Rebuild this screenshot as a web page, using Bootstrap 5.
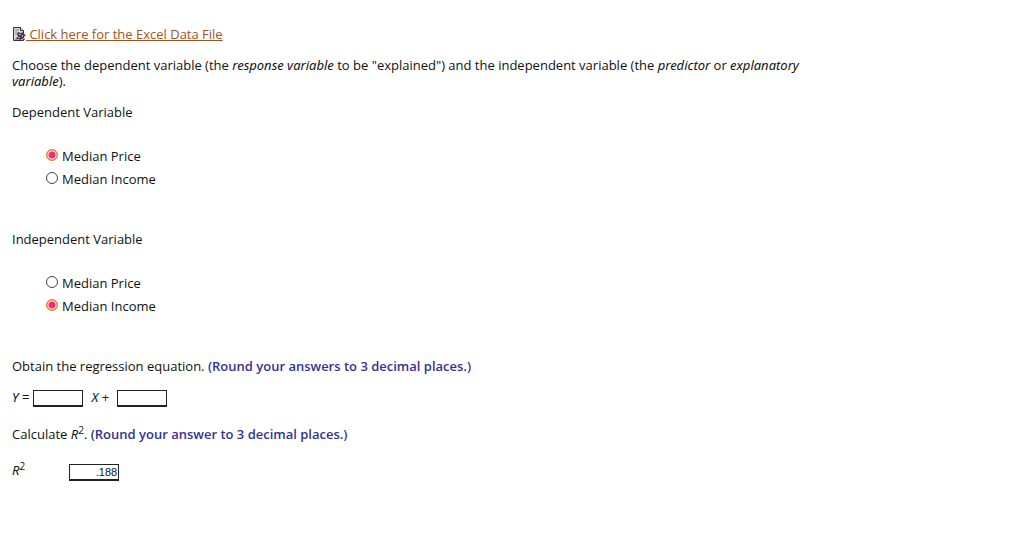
<!DOCTYPE html>
<html lang="en">
<head>
<meta charset="utf-8">
<meta name="viewport" content="width=device-width, initial-scale=1">
<title>Regression question</title>
<link rel="stylesheet" href="https://cdn.jsdelivr.net/npm/bootstrap@5.3.0/dist/css/bootstrap.min.css">
<style>
body { font-family: "Open Sans", "Noto Sans", sans-serif; font-size: 13px; line-height: 16px; color: #111; background: #fff; }
main { padding: 26px 12px; }
i { font-family: "Noto Sans", "Open Sans", sans-serif; }
.data-link { color: #a4511c; }
.data-link:hover { color: #7c3a10; }
.file-icon { width: 14px; height: 15px; }
.prompt-text { margin-bottom: 15px; }
.choices { margin: 0 0 44px 34px; padding-top: 28px; gap: 7px; }
.choices .form-check { gap: 4px; min-height: 0; }
.choices .form-check-input { width: 12px; height: 12px; margin: 1px 0 0; float: none; border: 1px solid #444; box-shadow: none; }
.choices .form-check-input:checked { border-color: #e8772e; background: radial-gradient(circle, #f5277f 0 3px, #fff0dc 4px, #f08a3c 5px); }
.hint { color: #34309a; font-weight: 600; }
.answer { width: 50px; height: 17px; padding: 0 1px; border: 1px solid #222; border-bottom-width: 2px; border-radius: 0; font-family: "Liberation Sans", sans-serif; font-size: 11px; line-height: 14px; text-align: right; color: #111; }
.answer:focus { box-shadow: none; border-color: #222; }
sup { font-size: 10px; top: -5px; }
.equation { margin-bottom: 19px; }
.equation label { padding-bottom: 2px; }
.equation label:first-child { margin-right: 4px; }
.result { gap: 44px; margin-top: 20px; }
.result label { padding-bottom: 4px; }
</style>
</head>
<body>
<main class="container-fluid">
  <div class="prompt-text d-flex align-items-center">
    <svg class="file-icon" viewBox="0 0 14 15" aria-hidden="true">
      <path d="M1.500 .5h7l3 3v10h-10z" fill="#d8d8d8" stroke="#333"/>
      <path d="M8.500 .5v3h3" fill="#fff" stroke="#333"/>
      <path d="M3 3h4M3 5h2M3 7h2" stroke="#888"/>
      <path d="M6 5l3 1 2-1 1 2 2 1-2 2 1 3-3-1-2 1-2-1-3 1 3-4-1-2z" fill="#4a404e"/>
      <path d="M7 7h2v1H7zM10 8h1v2h-1zM6 10h2v1H6zM11 11h1v1h-1z" fill="#c99ac2"/>
    </svg>
    <a class="data-link" href="#">&nbsp;Click here for the Excel Data File</a>
  </div>
  <div class="row"><div class="col-10">
    <p class="prompt-text">Choose the dependent variable (the <i>response variable</i> to be "explained") and the independent variable (the <i>predictor</i> or <i>explanatory variable</i>).</p>
  </div></div>

  <div id="dep-label">Dependent Variable</div>
  <div class="choices d-flex flex-column" role="radiogroup" aria-labelledby="dep-label">
    <div class="form-check d-flex p-0 m-0">
      <input class="form-check-input" type="radio" name="dep" id="dep-price" checked>
      <label for="dep-price">Median Price</label>
    </div>
    <div class="form-check d-flex p-0 m-0">
      <input class="form-check-input" type="radio" name="dep" id="dep-income">
      <label for="dep-income">Median Income</label>
    </div>
  </div>

  <div id="ind-label">Independent Variable</div>
  <div class="choices d-flex flex-column" role="radiogroup" aria-labelledby="ind-label">
    <div class="form-check d-flex p-0 m-0">
      <input class="form-check-input" type="radio" name="ind" id="ind-price">
      <label for="ind-price">Median Price</label>
    </div>
    <div class="form-check d-flex p-0 m-0">
      <input class="form-check-input" type="radio" name="ind" id="ind-income" checked>
      <label for="ind-income">Median Income</label>
    </div>
  </div>

  <p class="prompt-text">Obtain the regression equation. <span class="hint">(Round your answers to 3 decimal places.)</span></p>
  <div class="equation d-flex align-items-center">
    <label for="slope"><i>Y</i> =</label>
    <input class="answer form-control" id="slope" type="text">
    <label class="ms-2 me-2" for="intercept"><i>X</i> +</label>
    <input class="answer form-control" id="intercept" type="text">
  </div>
  <p class="m-0">Calculate <i>R</i><sup>2</sup>. <span class="hint">(Round your answer to 3 decimal places.)</span></p>
  <div class="result d-flex align-items-center">
    <label for="rsq"><i>R</i><sup>2</sup></label>
    <input class="answer form-control" id="rsq" type="text" value=".188">
  </div>
</main>
<script src="https://cdn.jsdelivr.net/npm/bootstrap@5.3.0/dist/js/bootstrap.bundle.min.js"></script>
</body>
</html>
